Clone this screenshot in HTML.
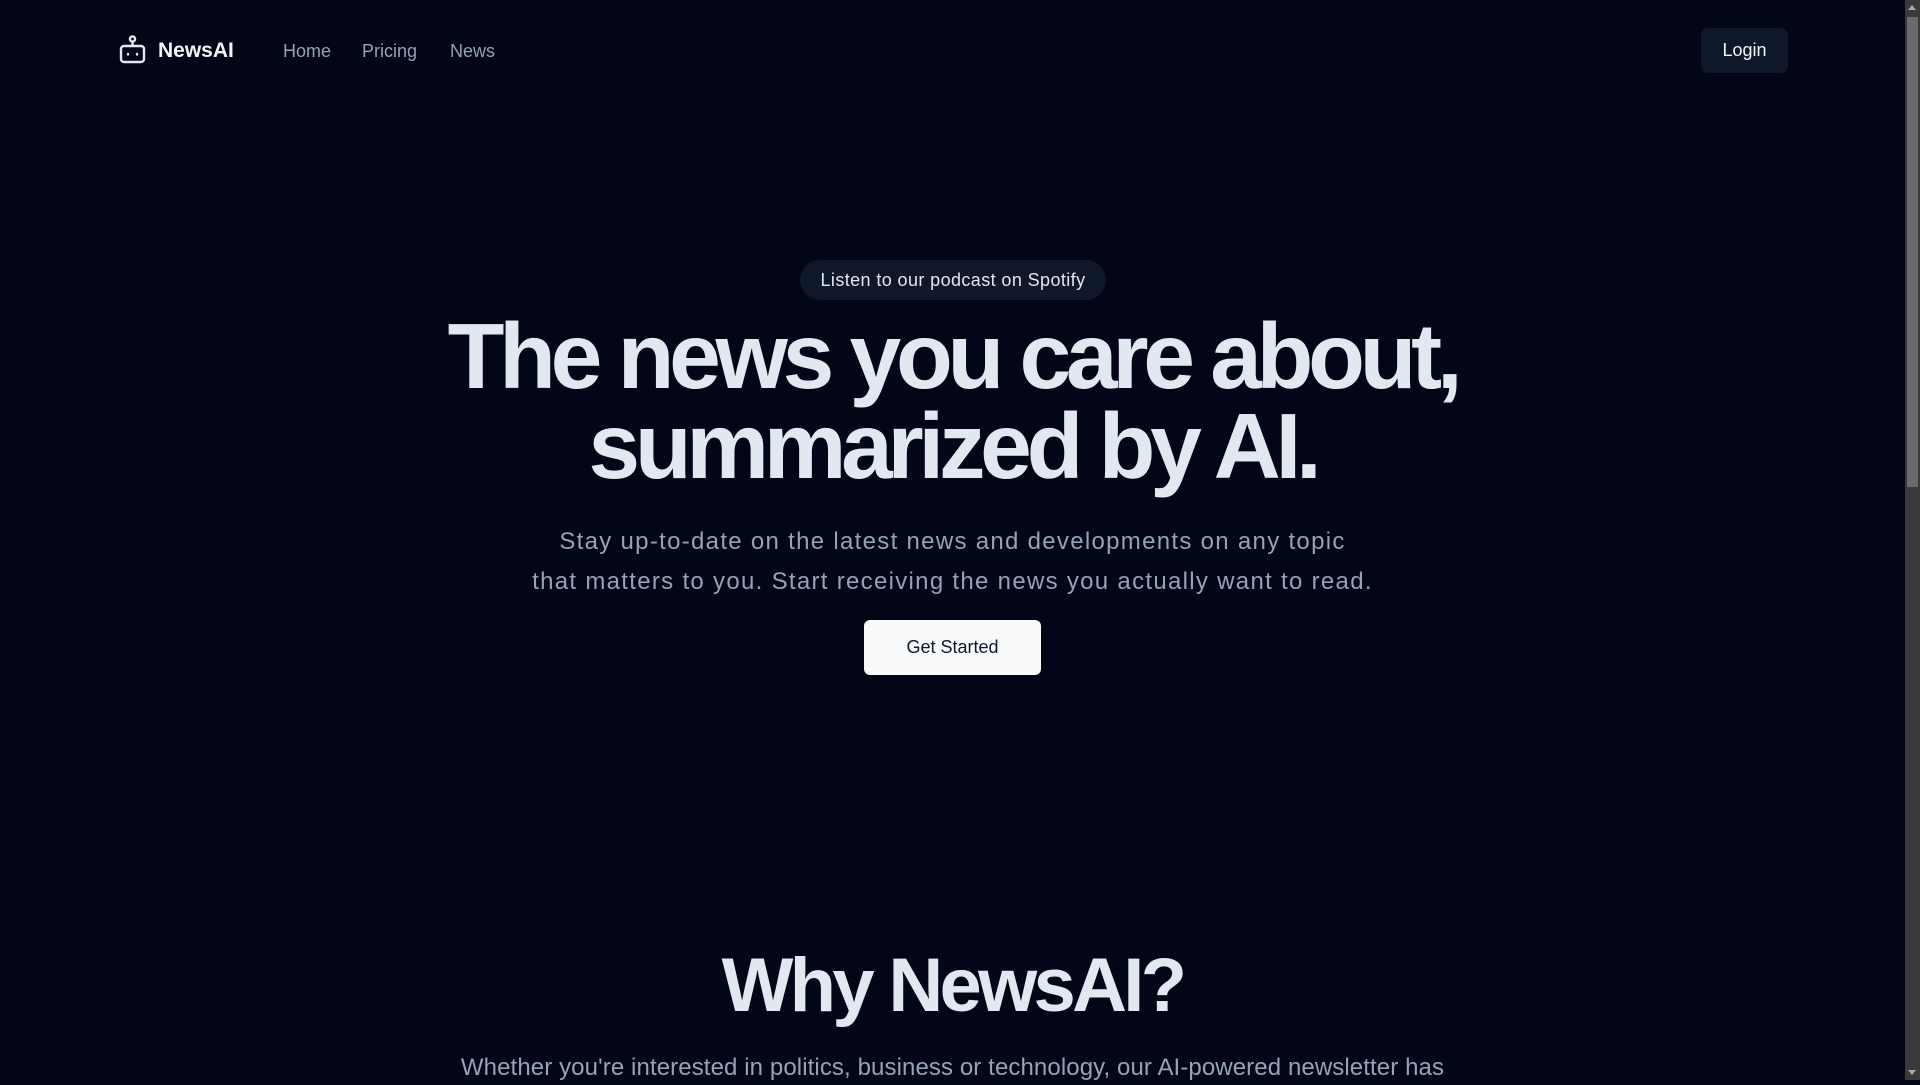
<!DOCTYPE html>
<html><head><meta charset="utf-8"><style>
html,body{margin:0;padding:0;}
body{width:1920px;height:1080px;overflow:hidden;background:#020617;font-family:"Liberation Sans",sans-serif;position:relative;}
.sb{position:absolute;right:0;top:0;width:15px;height:1080px;background:#3a3a3a;}
.sb .th{position:absolute;left:2px;top:17px;width:11px;height:470px;background:#6b6b6b;}
.sb .up{position:absolute;left:3px;top:5px;border-left:4px solid transparent;border-right:4px solid transparent;border-bottom:5px solid #aaa;}
.sb .dn{position:absolute;left:3px;bottom:5px;border-left:4px solid transparent;border-right:4px solid transparent;border-top:5px solid #aaa;}
.abs{position:absolute;}
.nav{color:#94a3b8;font-size:18px;top:41px;}
.c{position:absolute;left:0;width:1905px;text-align:center;}
</style></head><body>
<svg class="abs" style="left:119px;top:35px" width="28" height="30" viewBox="0 0 28 30" fill="none" stroke="#e2e8f0" stroke-width="2.4" stroke-linecap="round" stroke-linejoin="round">
<circle cx="13.5" cy="4" r="2.6"/><path d="M13.5 6.6V11"/><rect x="2" y="11" width="23" height="16" rx="3"/><path d="M9 19v0.5M18 19v0.5"/></svg>
<div class="abs" style="left:158px;top:39px;color:#f1f5f9;font-weight:bold;font-size:21px;">NewsAI</div>
<div class="abs nav" style="left:283px">Home</div>
<div class="abs nav" style="left:362px">Pricing</div>
<div class="abs nav" style="left:450px">News</div>
<div class="abs" style="left:1701px;top:28px;width:87px;height:45px;background:#0f172a;border-radius:7px;color:#f1f5f9;font-size:18px;line-height:45px;text-align:center;">Login</div>
<div class="abs" style="left:800px;top:260px;width:306px;height:40px;background:#0f172a;border-radius:20px;color:#e2e8f0;font-size:18px;letter-spacing:0.4px;line-height:40px;text-align:center;">Listen to our podcast on Spotify</div>
<div class="c" style="top:311px;color:#e2e8f0;font-weight:bold;font-size:93px;line-height:90px;letter-spacing:-5.3px;">The news you care about,<br>summarized by AI.</div>
<div class="c" style="top:522px;color:#94a3b8;font-size:24px;letter-spacing:1.3px;line-height:40px;">Stay up-to-date on the latest news and developments on any topic<br>that matters to you. Start receiving the news you actually want to read.</div>
<div class="abs" style="left:864px;top:620px;width:177px;height:55px;background:#f8fafc;border-radius:6px;color:#0f172a;font-size:18px;line-height:55px;text-align:center;">Get Started</div>
<div class="c" style="top:946px;color:#e2e8f0;font-weight:bold;font-size:76px;line-height:80px;letter-spacing:-3.7px;">Why NewsAI?</div>
<div class="c" style="top:1051px;color:#94a3b8;font-size:24px;letter-spacing:0.1px;line-height:34px;">Whether you're interested in politics, business or technology, our AI-powered newsletter has</div>
<div class="sb"><div class="up"></div><div class="th"></div><div class="dn"></div></div>
</body></html>
